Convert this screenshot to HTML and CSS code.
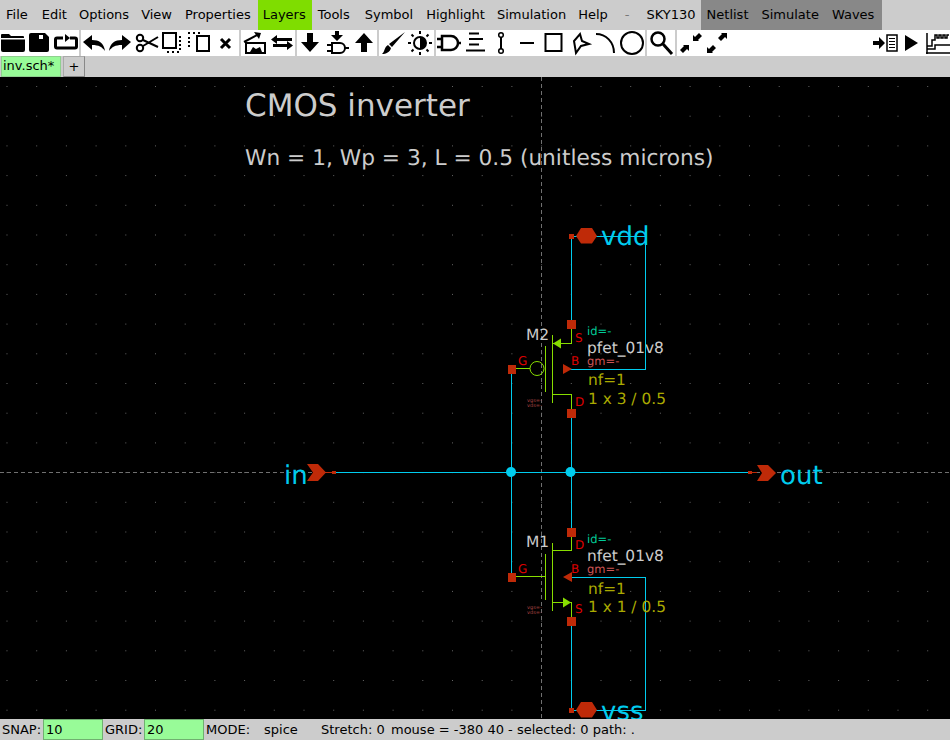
FILE: index.html
```html
<!DOCTYPE html>
<html lang="en">
<head>
<meta charset="utf-8">
<title>xschem - inv.sch</title>
<link rel="stylesheet" href="styles.css">
</head>
<body>
<div class="app">
  <nav class="menubar">
    <span class="menu">File</span><span class="menu m2">Edit</span><span class="menu">Options</span><span class="menu">View</span><span class="menu m1">Properties</span><span class="menu menu-layers">Layers</span><span class="menu">Tools</span><span class="menu m3">Symbol</span><span class="menu m1">Highlight</span><span class="menu">Simulation</span><span class="menu">Help</span><span class="menu menu-dash">-</span><span class="menu menu-sky">SKY130</span>
    <div class="menu-dark"><span class="menu">Netlist</span><span class="menu m1">Simulate</span><span class="menu m1">Waves</span></div>
  </nav>

  <div class="toolbar">
    <div class="group g1">
      <div class="tool"><svg viewBox="0 0 26 26"><path d="M1 8V5a1 1 0 0 1 1-1h7l2 2h12a1 1 0 0 1 1 1v1zM1 9.500h24V20a2 2 0 0 1-2 2H3a2 2 0 0 1-2-2z"/></svg></div>
      <div class="tool"><svg viewBox="0 0 26 26"><path d="M3 5a2 2 0 0 1 2-2h14l4 4v13a2 2 0 0 1-2 2H5a2 2 0 0 1-2-2z"/><rect class="w" x="13" y="5" width="4" height="4"/></svg></div>
      <div class="tool"><svg viewBox="0 0 26 26"><path class="s3" d="M10 8H4a1.500 1.500 0 0 0-1.500 1.500v7A1.500 1.500 0 0 0 4 18h18a1.500 1.500 0 0 0 1.500-1.500v-7A1.500 1.500 0 0 0 22 8h-5"/><path d="M12 4l5 4-5 4z"/></svg></div>
    </div>
    <div class="group g2">
      <div class="tool"><svg viewBox="0 0 26 26"><path d="M2 12l9-7v5c7 0 12 3 13 11-3-4-6-6-13-6v5z"/></svg></div>
      <div class="tool"><svg viewBox="0 0 26 26"><path d="M24 12l-9-7v5C8 10 3 13 2 21c3-4 6-6 13-6v5z"/></svg></div>
      <div class="tool"><svg viewBox="0 0 26 26"><circle class="s2" cx="6" cy="8" r="3.200"/><circle class="s2" cx="6" cy="18" r="3.200"/><path class="s2" d="M9 10l15 7M9 16l15-9"/></svg></div>
      <div class="tool"><svg viewBox="0 0 26 26"><rect class="s2" x="3" y="3" width="13" height="15"/><path class="dots" d="M19 7h2M19 11h2M19 15h2M19 19h2M7 22h2M12 22h2M17 22h2"/></svg></div>
      <div class="tool"><svg viewBox="0 0 26 26"><rect class="s2" x="11" y="6" width="12" height="15"/><path class="dots" d="M2 3h2M7 3h2M12 3h2M2 8h2M2 12h2M2 16h2"/></svg></div>
      <div class="tool"><svg viewBox="0 0 26 26"><path class="s3" d="M8 9l9 9M17 9l-9 9"/></svg></div>
    </div>
    <div class="group g3">
      <div class="tool"><svg viewBox="0 0 26 26"><path class="s2" d="M4 23V13h19v10zM2 12L15 5"/><path d="M12 2l7 1-2 6zM8 22l3-5 3 2 4-2 2 5z"/></svg></div>
      <div class="tool"><svg viewBox="0 0 26 26"><path d="M8 5L2 9.500 8 14v-3h15V8H8zM18 11l6 4.500-6 4.500v-3H4v-3h14z"/></svg></div>
    </div>
    <div class="group g4">
      <div class="tool"><svg viewBox="0 0 26 26"><path d="M10 3h6v9h6l-9 10-9-10h6z"/></svg></div>
      <div class="tool"><svg viewBox="0 0 26 26"><path d="M11 1h4v4h4l-6 6-6-6h4z"/><path class="s2" d="M8 13h8a5 5 0 0 1 0 10H8zM3 15h5M3 21h5M21 18h4"/></svg></div>
      <div class="tool"><svg viewBox="0 0 26 26"><path d="M13 3l9 10h-6v9h-6v-9H4z"/></svg></div>
    </div>
    <div class="group g5">
      <div class="tool"><svg viewBox="0 0 26 26"><path d="M25 2L12 17l-3-3zM8 15l3 3c-1 4-5 6-9 6 3-2 2-7 6-9z"/></svg></div>
      <div class="tool"><svg viewBox="0 0 26 26"><circle class="s2" cx="13" cy="13" r="6"/><path d="M13 7a6 6 0 0 1 0 12z"/><path class="s2" d="M13 1v3M13 22v3M1 13h3M22 13h3M4.500 4.500l2 2M19.500 19.500l2 2M4.500 21.500l2-2M19.500 6.500l2-2"/></svg></div>
    </div>
    <div class="group g6">
      <div class="tool"><svg viewBox="0 0 26 26"><path class="s25" d="M6 6h9a7 7 0 0 1 0 14H6zM1 9h5M1 17h5M22 13h3"/></svg></div>
      <div class="tool"><svg viewBox="0 0 26 26"><path class="s2" d="M7 3.500h10M7 9h14M7 14.500h10M4 20.500h19"/></svg></div>
      <div class="tool"><svg viewBox="0 0 26 26"><circle class="s15" cx="13" cy="5" r="2.300"/><circle class="s15" cx="13" cy="21" r="2.300"/><path class="s2" d="M13 7v12"/></svg></div>
      <div class="tool"><svg viewBox="0 0 26 26"><path class="s2" d="M6 13h14"/></svg></div>
      <div class="tool"><svg viewBox="0 0 26 26"><rect class="s2" x="4.500" y="4" width="16" height="17"/></svg></div>
      <div class="tool"><svg viewBox="0 0 26 26"><path class="s2" d="M13 4l2 7 7 3-8 2-5 7-2-12z"/></svg></div>
      <div class="tool"><svg viewBox="0 0 26 26"><path class="s2" d="M3 4c10 0 18 8 18 19"/></svg></div>
      <div class="tool"><svg viewBox="0 0 26 26"><circle class="s2" cx="13" cy="13" r="11"/></svg></div>
    </div>
    <div class="group g7">
      <div class="tool"><svg viewBox="0 0 26 26"><circle class="s25" cx="10" cy="9" r="6.500"/><path class="s3" d="M15 14l9 10"/></svg></div>
    </div>
    <div class="group g8">
      <div class="tool"><svg viewBox="0 0 26 26"><path d="M4 15h6v6l-2-2-4 4-3-3 4-4zM20 11h-6V5l2 2 4-4 3 3-4 4z"/></svg></div>
      <div class="tool"><svg viewBox="0 0 26 26"><path d="M8 23H2v-6l2 2 4-4 3 3-4 4zM16 3h6v6l-2-2-4 4-3-3 4-4z"/></svg></div>
      <div class="tool-gap"></div>
      <div class="tool"><svg viewBox="0 0 26 26"><path d="M0 11h6V7l6 6-6 6v-4H0z"/><rect class="s15" x="14" y="5" width="10" height="16"/><path class="s1" d="M16 8.500h6M16 11.500h6M16 14.500h6M16 17.500h6"/></svg></div>
      <div class="tool"><svg viewBox="0 0 26 26"><path d="M6 5l13 8-13 8z"/></svg></div>
      <div class="tool tool-last"><svg viewBox="0 0 26 26"><path class="s15" d="M2 3v21M1 23h24M2 16h5V10h3V5h2v3h2V5h2v3h2V5h2v3h2V5h2M2 19h8v-4h15"/></svg></div>
    </div>
  </div>

  <div class="tabbar">
    <span class="tab">inv.sch*</span>
    <span class="tab-add">+</span>
  </div>

  <svg class="canvas" viewBox="0 77 950 642" role="img" aria-label="CMOS inverter schematic">
    <defs>
      <pattern id="grid" x="6.500" y="86" width="29.700" height="29.700" patternUnits="userSpaceOnUse">
        <rect class="griddot" width="1" height="1"/>
      </pattern>
    </defs>
    <rect class="bg" x="0" y="77" width="950" height="642"/>
    <rect class="gridfill" x="0" y="77" width="950" height="642"/>
    <path class="origin" d="M541.500 77V719M0 472.500H950"/>

    <text class="title" x="245" y="116">CMOS inverter</text>
    <text class="subtitle" x="245" y="165">Wn = 1, Wp = 3, L = 0.5 (unitless microns)</text>

    <!-- wires -->
    <path class="wire" d="M511.500 369V577M571.500 236V325M571.500 236H645.500V369H566M571.500 413V532M571.500 621V710H645.500V577H566M332 472.500H750"/>
    <circle class="junction" cx="511" cy="472" r="5"/>
    <circle class="junction" cx="570.500" cy="472" r="5"/>

    <!-- io pins -->
    <path class="pin" d="M576 236l5-8h11l5 8-5 7.500h-11z"/>
    <rect class="pin" x="569" y="234" width="5" height="5"/>
    <text class="net" x="601" y="245">vdd</text>
    <path class="pin" d="M576 710l5-8h11l5 8-5 7.500h-11z"/>
    <rect class="pin" x="569" y="708" width="5" height="5"/>
    <text class="net" x="601" y="720">vss</text>
    <path class="pin" d="M307 464h11l8 8.500-8 8.500h-11l6-8.500z"/>
    <path class="pinline" d="M326 472.500h7"/>
    <rect class="pin" x="332" y="471" width="4" height="3"/>
    <text class="net" x="284" y="484">in</text>
    <path class="pin" d="M757 465h11l8 8-8 8h-11l5-8z"/>
    <path class="pinline" d="M749 472.500h8"/>
    <rect class="pin" x="748" y="471" width="4" height="3"/>
    <text class="net" x="780" y="484">out</text>

    <!-- M2 pfet -->
    <path class="fet" d="M571.500 329V343.500H552.500M552.500 335V403M545.500 346V392M552.500 394.500H571.500V409M516 368.500H530"/>
    <circle class="fet" cx="537" cy="368.500" r="7"/>
    <path class="fetfill" d="M553 343.500l8-5v10z"/>
    <path class="pin" d="M563 364l9 5-9 5z"/>
    <rect class="pin" x="567" y="320" width="9" height="9"/>
    <rect class="pin" x="567" y="409" width="9" height="9"/>
    <rect class="pin" x="508" y="365" width="8" height="9"/>
    <text class="name" x="526" y="340">M2</text>
    <text class="pinname" x="575" y="342">S</text>
    <text class="pinname" x="571" y="365">B</text>
    <text class="pinname" x="518" y="365">G</text>
    <text class="pinname" x="575" y="406">D</text>
    <text class="idv" x="587" y="335">id=-</text>
    <text class="model" x="587" y="353">pfet_01v8</text>
    <text class="gm" x="587" y="365">gm=-</text>
    <text class="param" x="588" y="385">nf=1</text>
    <text class="param" x="588" y="404">1 x 3 / 0.5</text>
    <text class="tiny" x="527" y="402">vgs=-</text>
    <text class="tiny" x="527" y="407">vds=-</text>

    <!-- M1 nfet -->
    <path class="fet" d="M571.500 537V550.500H552.500M552.500 543V611M545.500 554V600M552.500 602.500H571.500V617M516 576.500H545"/>
    <path class="fetfill" d="M571 602.500l-8-5v10z"/>
    <path class="pin" d="M563 577l9-5v10z"/>
    <rect class="pin" x="567" y="528" width="9" height="9"/>
    <rect class="pin" x="567" y="617" width="9" height="9"/>
    <rect class="pin" x="508" y="573" width="8" height="9"/>
    <text class="name" x="526" y="547">M1</text>
    <text class="pinname" x="575" y="549">D</text>
    <text class="pinname" x="571" y="573">B</text>
    <text class="pinname" x="518" y="573">G</text>
    <text class="pinname" x="575" y="613">S</text>
    <text class="idv" x="587" y="543">id=-</text>
    <text class="model" x="587" y="561">nfet_01v8</text>
    <text class="gm" x="587" y="573">gm=-</text>
    <text class="param" x="588" y="594">nf=1</text>
    <text class="param" x="588" y="612">1 x 1 / 0.5</text>
    <text class="tiny" x="527" y="609">vgs=-</text>
    <text class="tiny" x="527" y="614">vds=-</text>
  </svg>

  <footer class="statusbar">
    <span class="st-label st-snap">SNAP:</span><span class="entry">10</span>
    <span class="st-label st-grid">GRID:</span><span class="entry">20</span>
    <span class="st-label st-mode">MODE:</span><span class="st-spice">spice</span>
    <span class="st-stretch">Stretch: 0</span><span class="st-mouse">mouse = -380 40 - selected: 0 path: .</span>
  </footer>
</div>
</body>
</html>
```

FILE: styles.css
```css
* { box-sizing: border-box; }
html, body { margin: 0; padding: 0; background: #000; }
body { width: 950px; height: 740px; overflow: hidden; font-family: "DejaVu Sans", sans-serif; font-size: 13px; color: #000; }
.app { display: flex; flex-direction: column; width: 950px; height: 740px; background: #ccc; }

.menubar { display: flex; align-items: stretch; height: 30px; background: #ccc; }
.menu { display: flex; align-items: center; padding: 0 6px; line-height: 30px; white-space: nowrap; }
.m1 { margin-left: 1px; }
.m2 { margin-left: 2px; }
.m3 { margin-left: 3px; }
.menu-layers { background: #7fdd00; padding: 0 6px 0 5px; margin-left: 1px; }
.menu-dash { margin-left: 5px; color: #777; }
.menu-sky { margin-left: 5px; }
.menu-dark { display: flex; background: #888; width: 181px; margin-left: -1px; }

.toolbar { display: flex; gap: 2px; height: 26px; background: #ccc; }
.group { display: flex; background: #fff; height: 26px; }
.g1 { width: 79px; } .g2 { width: 158px; } .g3 { width: 54px; } .g4 { width: 80px; }
.g5 { width: 55px; } .g6 { width: 209px; } .g7 { width: 28px; } .g8 { flex: 1; padding-left: 2px; }
.tool { flex: 1 1 26px; display: flex; justify-content: center; min-width: 26px; }
.g8 .tool { flex: 0 0 26px; }
.tool-gap { flex: 1; }
.tool-last { margin-right: -1px; }
.tool svg { width: 26px; height: 26px; display: block; }
.tool svg path, .tool svg rect, .tool svg circle { fill: #000; }
.tool svg .w { fill: #fff; }
.tool svg .s1, .tool svg .s15, .tool svg .s2, .tool svg .s25, .tool svg .s3, .tool svg .dots { fill: none; stroke: #000; }
.tool svg .s1 { stroke-width: 1; }
.tool svg .s15 { stroke-width: 1.5; }
.tool svg .s2 { stroke-width: 2; }
.tool svg .s25 { stroke-width: 2.5; }
.tool svg .s3 { stroke-width: 3; }
.tool svg .dots { stroke-width: 2; }

.tabbar { display: flex; align-items: stretch; gap: 2px; height: 21px; padding-left: 1px; background: #ccc; }
.tab { width: 60px; padding-left: 1px; background: #98fb98; border: 1px solid #8fd08f; line-height: 17px; }
.tab-add { width: 22px; text-align: center; background: #ccc; border: 1px solid #aaa; border-right-color: #888; border-bottom-color: #888; line-height: 19px; }

.canvas { display: block; width: 950px; height: 642px; }
.canvas text { text-rendering: geometricPrecision; }
.bg { fill: #000; }
.gridfill { fill: url(#grid); }
.griddot { fill: #666; shape-rendering: crispEdges; }
.origin { fill: none; stroke: #707070; stroke-width: 1; stroke-dasharray: 4 3; shape-rendering: crispEdges; }
.title, .subtitle, .name, .model { fill: #ccc; }
.title { font-size: 31px; }
.subtitle { font-size: 21.700px; }
.wire { fill: none; stroke: #00ccee; stroke-width: 1; shape-rendering: crispEdges; }
.junction { fill: #00ccee; }
.pin { fill: #bf2a08; }
.pinline { fill: none; stroke: #bf2a08; stroke-width: 1; }
.net { fill: #00ccee; font-size: 26px; }
.fet { fill: none; stroke: #88dd00; stroke-width: 1; shape-rendering: crispEdges; }
circle.fet { shape-rendering: auto; }
.fetfill { fill: #88dd00; }
.name { font-size: 15.500px; }
.pinname { fill: #dd0000; font-size: 12px; }
.idv { fill: #00cc99; font-size: 11.500px; }
.gm { fill: #cc5555; font-size: 11.500px; }
.model { font-size: 15.400px; }
.param { fill: #aaaa00; font-size: 15.400px; }
.tiny { fill: #aa4444; font-size: 5px; }

.statusbar { display: flex; align-items: center; height: 21px; background: #ccc; white-space: nowrap; }
.entry { width: 60px; height: 21px; line-height: 20px; padding-left: 2px; background: #98fb98; border: 1px solid #70b070; }
.st-snap { width: 43px; padding-left: 2px; }
.st-grid { width: 41px; padding-left: 2px; }
.st-mode { width: 60px; padding-left: 2px; }
.st-spice { width: 57px; }
.st-stretch { width: 70px; }
```
